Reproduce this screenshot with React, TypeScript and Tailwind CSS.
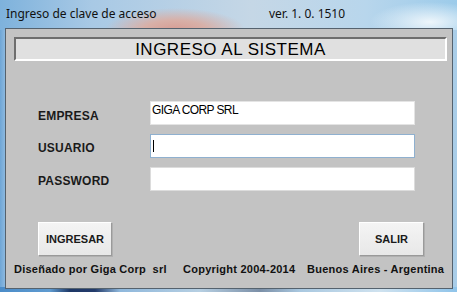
export default function App() {
  const labelCls = "w-[112px] text-[12px] font-bold tracking-[0.2px] text-[#1a1a1a]"
  return (
    <div
      className="relative w-[457px] h-[292px] overflow-hidden bg-[linear-gradient(90deg,#6fa6d6_0px,#9cc4e6_8px,#b9d3ea_40%,#c4dcef_75%,#a9cde8_100%)]"
      style={{ fontFamily: '"Liberation Sans", Arial, sans-serif' }}
    >
      {/* blurred glass behind title bar */}
      <div className="absolute inset-x-0 top-0 h-[30px] bg-[radial-gradient(ellipse_70px_22px_at_175px_30px,#d79d94_0%,#d8b0a8_45%,transparent_100%),radial-gradient(ellipse_60px_20px_at_430px_22px,#eef6fb_0%,transparent_100%),linear-gradient(90deg,#7eb2dc,#a8c9e5_20%,#c5d7e6_55%,#b8d6ec_80%,#9ccbea)]" />
      <div className="absolute left-0 right-0 bottom-0 h-[5px] bg-[linear-gradient(90deg,#4b8cc8_0px,#5f9bd0_50px,#1d3766_70px,#233b6b_95px,#8fb8dc_120px,#b6cfe2_200px,#7b8fa7_260px,#a9c8e0_300px,#cfe2ef_380px,#8fc4ea_457px)]" />

      <div className="relative flex flex-col h-full">
        <div
          className="h-[28px] flex items-center pl-[6px] text-[12px] text-[#111]"
          style={{ fontFamily: '"Noto Sans", "Open Sans", sans-serif' }}
        >
          <span className="w-[263px]">Ingreso de clave de acceso</span>
          <span>ver. 1. 0. 1510</span>
        </div>

        <div className="ml-[5px] mr-[4px] h-[261px] border border-[#55626e] bg-[#c3c3c3] flex flex-col">
          <div className="mt-[8px] ml-[8px] mr-[5px] h-[24px] bg-[#e0e0e0] border-t-2 border-l-2 border-t-[#6e6e6e] border-l-[#6e6e6e] border-b-2 border-r-2 border-b-white border-r-white flex items-center justify-center">
            <span className="text-[17px] tracking-[0.5px] text-black leading-none">INGRESO AL SISTEMA</span>
          </div>

          <div className="mt-[40px] pl-[32px] flex flex-col gap-[9px]">
            <div className="flex items-center h-[24px]">
              <span className={labelCls + " mt-[6px]"}>EMPRESA</span>
              <div className="w-[265px] h-[24px] bg-white border border-[#e4e4e4] pl-[1px] pt-[2px] text-[12px] leading-[12px] tracking-[-0.6px] text-black">
                GIGA CORP SRL
              </div>
            </div>
            <div className="flex items-center h-[24px]">
              <span className={labelCls + " mt-[3px]"}>USUARIO</span>
              <div className="w-[265px] h-[24px] bg-white border border-[#8fb0cf] flex items-center pl-[2px]">
                <div className="w-[1px] h-[12px] bg-black" />
              </div>
            </div>
            <div className="flex items-center h-[24px]">
              <span className={labelCls + " mt-[3px]"}>PASSWORD</span>
              <div className="w-[265px] h-[24px] bg-white border border-[#dcdcdc]" />
            </div>
          </div>

          <div className="mt-[31px] flex justify-between pl-[32px] pr-[28px]">
            <button className="w-[74px] h-[34px] bg-[linear-gradient(#f4f4f4,#e8e8e8)] border border-white border-r-[#9a9a9a] border-b-[#9a9a9a] shadow-[1px_1px_0_#b0b0b0] text-[11px] font-bold text-[#1a1a1a]">
              INGRESAR
            </button>
            <button className="w-[65px] h-[34px] bg-[linear-gradient(#f4f4f4,#e8e8e8)] border border-white border-r-[#9a9a9a] border-b-[#9a9a9a] shadow-[1px_1px_0_#b0b0b0] text-[11px] font-bold text-[#1a1a1a]">
              SALIR
            </button>
          </div>

          <div className="mt-[5px] flex pl-[8px] text-[11px] font-bold tracking-[0.25px] text-[#111] whitespace-pre">
            <span className="w-[169px]">Diseñado por Giga Corp  srl</span>
            <span className="w-[124px]">Copyright 2004-2014</span>
            <span>Buenos Aires - Argentina</span>
          </div>
        </div>
      </div>
    </div>
  )
}
